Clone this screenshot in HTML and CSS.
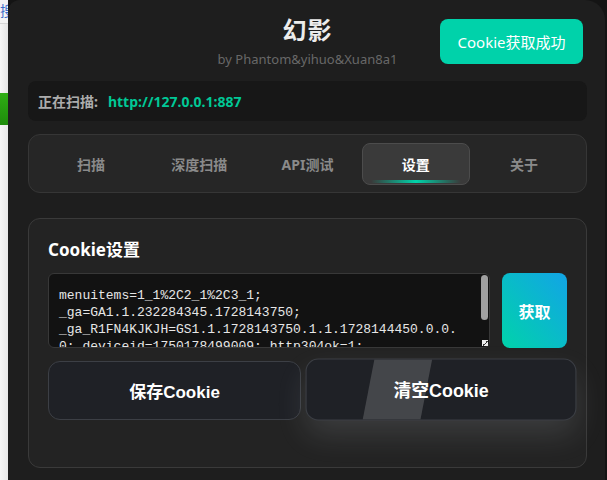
FILE: index.html
```html
<!DOCTYPE html>
<html lang="zh-CN">
<head>
  <meta charset="UTF-8">
  <meta name="viewport" content="width=device-width, initial-scale=1.0">
  <title>幻影</title>
  <link rel="stylesheet" href="styles.css">
</head>
<body>
  <!-- page behind the extension popup -->
  <div class="page-strip">
    <div class="strip-top">搜</div>
    <div class="strip-mid"></div>
    <div class="strip-green"></div>
    <div class="strip-low"></div>
  </div>

  <div class="backdrop">
    <div class="panel">
      <header class="top">
        <div></div>
        <div class="brand">
          <h1>幻影</h1>
          <p>by Phantom&amp;yihuo&amp;Xuan8a1</p>
        </div>
        <button class="status-btn">Cookie获取成功</button>
      </header>

      <div class="scan-bar">
        <span class="scan-label">正在扫描:</span>
        <span class="scan-url">http://127.0.0.1:887</span>
      </div>

      <nav class="tabs">
        <button class="tab">扫描</button>
        <button class="tab">深度扫描</button>
        <button class="tab">API测试</button>
        <button class="tab active">设置</button>
        <button class="tab">关于</button>
      </nav>

      <section class="card">
        <h2>Cookie设置</h2>
        <div class="cookie-row">
          <div class="cookie-box">
            <textarea id="cookie" spellcheck="false">menuitems=1_1%2C2_1%2C3_1; _ga=GA1.1.232284345.1728143750; _ga_R1FN4KJKJH=GS1.1.1728143750.1.1.1728144450.0.0.0; deviceid=1750178499009; http304ok=1; PHPSESSID=8f3c2a1b9d7e4f60a5c3b2e1d0f9a8b7; security=low;</textarea>
            <span class="scroll-thumb"></span>
            <span class="grip"></span>
          </div>
          <button class="fetch-btn">获取</button>
        </div>
        <div class="actions">
          <button class="action-btn save">保存Cookie</button>
          <button class="action-btn clear">清空Cookie</button>
        </div>
      </section>
    </div>
  </div>
</body>
</html>
```

FILE: styles.css
```css
* {
  box-sizing: border-box;
}
body {
  margin: 0;
  height: 480px;
  overflow: hidden;
  display: flex;
  background-color: #141414;
  font-family: "Noto Sans", "Noto Sans CJK SC", sans-serif;
}
button {
  font-family: inherit;
  cursor: pointer;
}

/* left strip: page behind the popup */
.page-strip {
  width: 8px;
  flex: none;
  display: flex;
  flex-direction: column;
  overflow: hidden;
  background-color: #f3f3f3;
}
.strip-top {
  height: 24px;
  line-height: 22px;
  font-size: 14px;
  color: #3b6cc9;
  border-bottom: 1px solid #d6d6d6;
  white-space: nowrap;
}
.strip-mid {
  height: 69px;
  background: linear-gradient(90deg, #f6f6f6, #e4e4e4);
}
.strip-green {
  height: 32px;
  background: linear-gradient(#2fae14, #1e8c0b);
}
.strip-low {
  flex: 1;
  background: linear-gradient(90deg, #f6f6f6, #e8e8e8);
}

.backdrop {
  flex: 1;
}
.panel {
  width: 597px;
  height: 100%;
  background-color: #1e1e1e;
  border-radius: 12px 20px 0 0;
  padding: 14px 18px 0 20px;
}

/* header */
.top {
  display: grid;
  grid-template-columns: 1fr auto 1fr;
  align-items: start;
  margin-bottom: 13px;
}
.brand {
  text-align: center;
}
.brand h1 {
  margin: 0;
  font-size: 24px;
  line-height: 32px;
  font-weight: 700;
  color: #ececec;
  letter-spacing: 1px;
}
.brand p {
  margin: 4px 0 0;
  font-size: 13px;
  line-height: 18px;
  color: #686868;
}
.status-btn {
  justify-self: end;
  margin: 5px 4px 0 0;
  width: 143px;
  height: 45px;
  border: none;
  border-radius: 8px;
  background-color: #00d2aa;
  color: #fff;
  font-size: 15px;
}

/* scanning bar */
.scan-bar {
  height: 40px;
  display: flex;
  align-items: center;
  padding: 0 10px;
  border-radius: 8px;
  background-color: #171717;
  font-size: 14px;
}
.scan-label {
  color: #acacac;
  font-weight: 700;
  margin-right: 10px;
}
.scan-url {
  color: #00c896;
  font-weight: 700;
}

/* tabs */
.tabs {
  display: flex;
  margin-top: 13px;
  padding: 8px 8px 7px;
  border: 1px solid #363636;
  border-radius: 12px;
  background-color: #262626;
}
.tab {
  flex: 1;
  height: 42px;
  position: relative;
  border: 1px solid transparent;
  border-radius: 8px;
  background: none;
  color: #8a8a8a;
  font-size: 14px;
  font-weight: 700;
}
.tab.active {
  background-color: #3a3a3a;
  border-color: #4c4c4c;
  color: #fff;
}
.tab.active::after {
  content: "";
  position: absolute;
  left: 8px;
  right: 8px;
  bottom: 1px;
  height: 3px;
  border-radius: 2px;
  background: linear-gradient(90deg, transparent, #00d4aa 50%, transparent);
}

/* cookie card */
.card {
  margin-top: 25px;
  padding: 19px 19px 47px;
  border: 1px solid #3a3a3a;
  border-radius: 12px;
  background-color: #232323;
}
.card h2 {
  margin: 0 0 11px;
  font-size: 17px;
  line-height: 24px;
  font-weight: 700;
  color: #fff;
}
.cookie-row {
  display: flex;
  gap: 12px;
}
.cookie-box {
  flex: 1;
  height: 75px;
  position: relative;
}
#cookie {
  display: block;
  width: 100%;
  height: 100%;
  padding: 13px 28px 8px 10px;
  border: 1px solid #383838;
  border-radius: 6px;
  background-color: #121212;
  color: #e6e6e6;
  font-family: "Liberation Mono", monospace;
  font-size: 13px;
  line-height: 17px;
  overflow: hidden;
  resize: none;
  outline: none;
}
.scroll-thumb {
  position: absolute;
  top: 2px;
  right: 2px;
  width: 7px;
  height: 45px;
  border-radius: 4px;
  background-color: #a0a0a0;
}
.grip {
  position: absolute;
  right: 2px;
  bottom: 2px;
  width: 6px;
  height: 6px;
  background: linear-gradient(135deg, #eeeeee 50%, #3a3a3a 50%, #3a3a3a 65%, #eeeeee 65%);
}
.fetch-btn {
  width: 65px;
  height: 75px;
  flex: none;
  border: none;
  border-radius: 8px;
  background: linear-gradient(to top right, #00d3aa, #12a4e6);
  color: #fff;
  font-size: 16px;
  font-weight: 700;
}

.actions {
  display: flex;
  gap: 8px;
  margin-top: 13px;
}
.action-btn {
  height: 59px;
  border: 1px solid #3c3f45;
  border-radius: 12px;
  background-color: #1f2126;
  color: #fff;
  font-family: "Liberation Sans", "Noto Sans CJK SC", sans-serif;
  font-size: 17px;
  font-weight: 700;
}
.save {
  flex: 0 0 253px;
}
.clear {
  flex: 1;
  position: relative;
  overflow: hidden;
  transform: translate(3px, -1px) scale(1.05);
  box-shadow: 0 14px 28px rgba(205, 210, 220, 0.14);
}
.clear::before {
  content: "";
  position: absolute;
  top: 0;
  bottom: 0;
  left: 59px;
  width: 55px;
  background-color: rgba(255, 255, 255, 0.17);
  transform: skewX(-11deg);
}
```
